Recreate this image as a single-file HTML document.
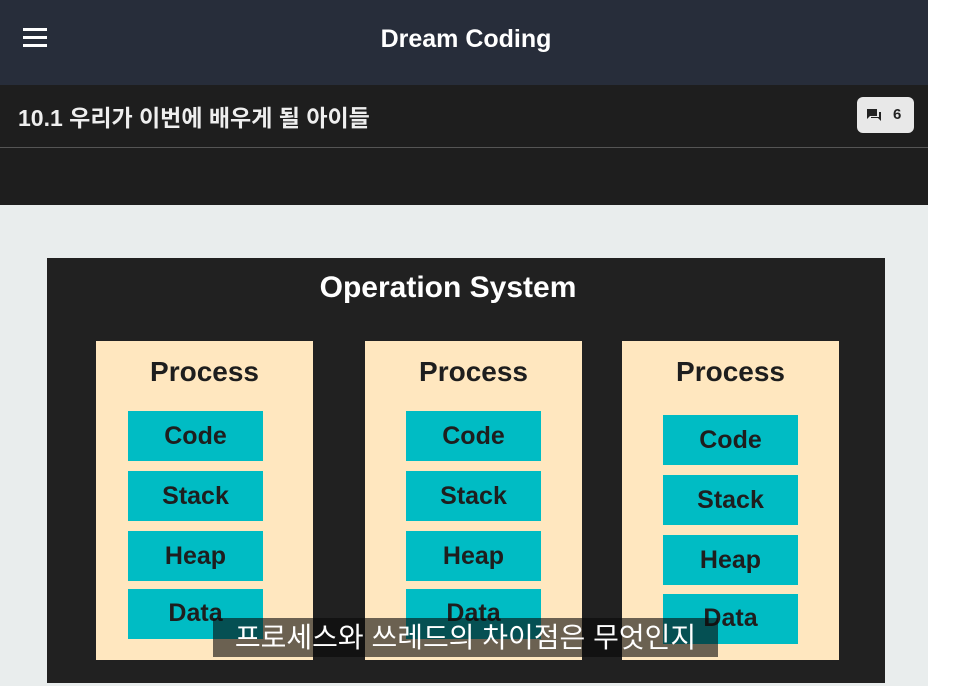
<!DOCTYPE html><html><head><meta charset="utf-8"><style>
*{margin:0;padding:0;box-sizing:border-box}
body{width:970px;height:686px;overflow:hidden;background:#fff;font-family:"Liberation Sans","Noto Sans CJK KR",sans-serif;position:relative}
.a{position:absolute}
.hdr{left:0;top:0;width:928px;height:85px;background:#272d3a}
.bar{left:0;top:85px;width:928px;height:120px;background:#1e1e1e}
.gray{left:0;top:205px;width:928px;height:481px;background:#e9eded}
.slide{left:47px;top:258px;width:838px;height:425px;background:#212121}
.proc{background:#ffe7bf;width:217px;height:319px;top:341px}
.pt{font-weight:bold;font-size:28px;color:#1e1e1e;text-align:center;width:217px;top:356px}
.c{background:#00bcc4;width:135px;height:50px;font-weight:bold;font-size:25px;color:#1e1e1e;text-align:center;line-height:50px}
</style></head><body>
<div class="a hdr"></div>
<div class="a" style="left:23px;top:28px;width:24px;height:3px;background:#fff;box-shadow:0 8px 0 #fff,0 16px 0 #fff"></div>
<div class="a" style="left:0;width:932px;top:25px;text-align:center;color:#fff;font-weight:bold;font-size:25px">Dream Coding</div>
<div class="a bar"></div>
<div class="a" style="left:0;top:147px;width:928px;height:1px;background:#555"></div>
<div class="a" style="left:18px;top:99px;color:#eee;font-weight:bold;font-size:23px">10.1 우리가 이번에 배우게 될 아이들</div>
<div class="a" style="left:857px;top:97px;width:57px;height:36px;background:#e8e8e8;border-radius:6px"></div>
<svg class="a" style="left:866px;top:108px" width="16" height="14" viewBox="0 0 16 14"><path d="M1 1h10v7H4l-3 3z" fill="#222"/><path d="M13 4h2v9l-3-3H5V9h8z" fill="#222"/></svg>
<div class="a" style="left:893px;top:106px;font-weight:bold;font-size:15px;color:#222">6</div>
<div class="a gray"></div>
<div class="a slide"></div>
<div class="a" style="left:47px;width:802px;top:271px;text-align:center;color:#fff;font-weight:bold;font-size:30px">Operation System</div>
<div class="a proc" style="left:96px"></div>
<div class="a proc" style="left:365px"></div>
<div class="a proc" style="left:622px"></div>
<div class="a pt" style="left:96px">Process</div>
<div class="a pt" style="left:365px">Process</div>
<div class="a pt" style="left:622px">Process</div>
<div class="a c" style="left:128px;top:411px">Code</div><div class="a c" style="left:128px;top:471px">Stack</div><div class="a c" style="left:128px;top:531px">Heap</div><div class="a c" style="left:128px;top:589px;line-height:48px">Data</div>
<div class="a c" style="left:406px;top:411px">Code</div><div class="a c" style="left:406px;top:471px">Stack</div><div class="a c" style="left:406px;top:531px">Heap</div><div class="a c" style="left:406px;top:589px;line-height:48px">Data</div>
<div class="a c" style="left:663px;top:415px">Code</div><div class="a c" style="left:663px;top:475px">Stack</div><div class="a c" style="left:663px;top:535px">Heap</div><div class="a c" style="left:663px;top:594px;line-height:48px">Data</div>
<div class="a" style="left:213px;top:618px;width:505px;height:39px;background:rgba(8,8,8,.6);color:#fff;font-size:28px;text-align:center;line-height:39px;white-space:nowrap">프로세스와 쓰레드의 차이점은 무엇인지</div>
</body></html>
